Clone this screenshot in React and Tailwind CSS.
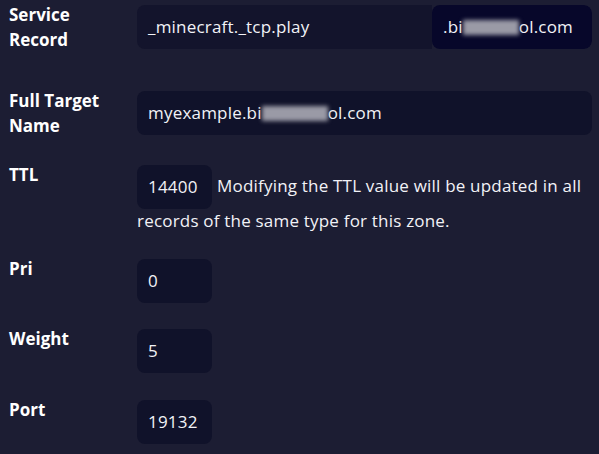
import React from "react";

const Blur = ({ w }) => (
    <span
        className="inline-block h-[15px] bg-[#9a9aa6] blur-[2px] align-middle"
        style={{ width: w }}
    />
);

const Label = ({ children }) => (
    <div className="w-[137px] shrink-0 pl-[9px] -mt-[3px] text-[17px] font-bold leading-[25px] text-white">
        {children}
    </div>
);

const Box = ({ children, width = "w-[75px]" }) => (
    <div className={`${width} h-[44px] flex items-center pl-[11px] rounded-lg bg-[#10122a] text-[17px] tracking-[0.2px] text-[#f2f2f7]`}>
        {children}
    </div>
);

const App = () => {
    return (
        <div
            className="w-[599px] h-[454px] overflow-hidden bg-[#1c1d33] pt-[5px]"
            style={{ fontFamily: '"Open Sans", "Noto Sans", sans-serif' }}
        >
            <div className="flex items-start">
                <Label>
                    Service
                    <br />
                    Record
                </Label>
                <div className="flex w-[455px] h-[44px] rounded-lg overflow-hidden text-[17px] tracking-[0.2px] text-[#f2f2f7]">
                    <div className="flex-1 flex items-center pl-[11px] bg-[#13142c]">
                        _minecraft._tcp.play
                    </div>
                    <div className="w-[160px] flex items-center pl-[11px] bg-[#07072a] rounded-lg whitespace-nowrap">
                        .bi<Blur w={56} />ol.com
                    </div>
                </div>
            </div>

            <div className="flex items-start mt-[39px]">
                <Label>
                    Full Target
                    <br />
                    Name
                </Label>
                <Box width="w-[455px]">
                    myexample.bi<Blur w={66} />ol.com
                </Box>
            </div>

            <div className="flex items-start mt-[27px]">
                <Label>TTL</Label>
                <div className="w-[455px] text-[17px] tracking-[0.2px] leading-6 text-[#f2f2f7]">
                    <span className="inline-flex align-middle w-[75px] h-[44px] items-center pl-[11px] mr-[5px] rounded-lg bg-[#10122a]">
                        14400
                    </span>
                    Modifying the TTL value will be updated in all records of the same type for this zone.
                </div>
            </div>

            <div className="flex items-start mt-[26px]">
                <Label>Pri</Label>
                <Box>0</Box>
            </div>

            <div className="flex items-start mt-[26px]">
                <Label>Weight</Label>
                <Box>5</Box>
            </div>

            <div className="flex items-start mt-[27px]">
                <Label>Port</Label>
                <Box>19132</Box>
            </div>
        </div>
    );
};

export default App;
